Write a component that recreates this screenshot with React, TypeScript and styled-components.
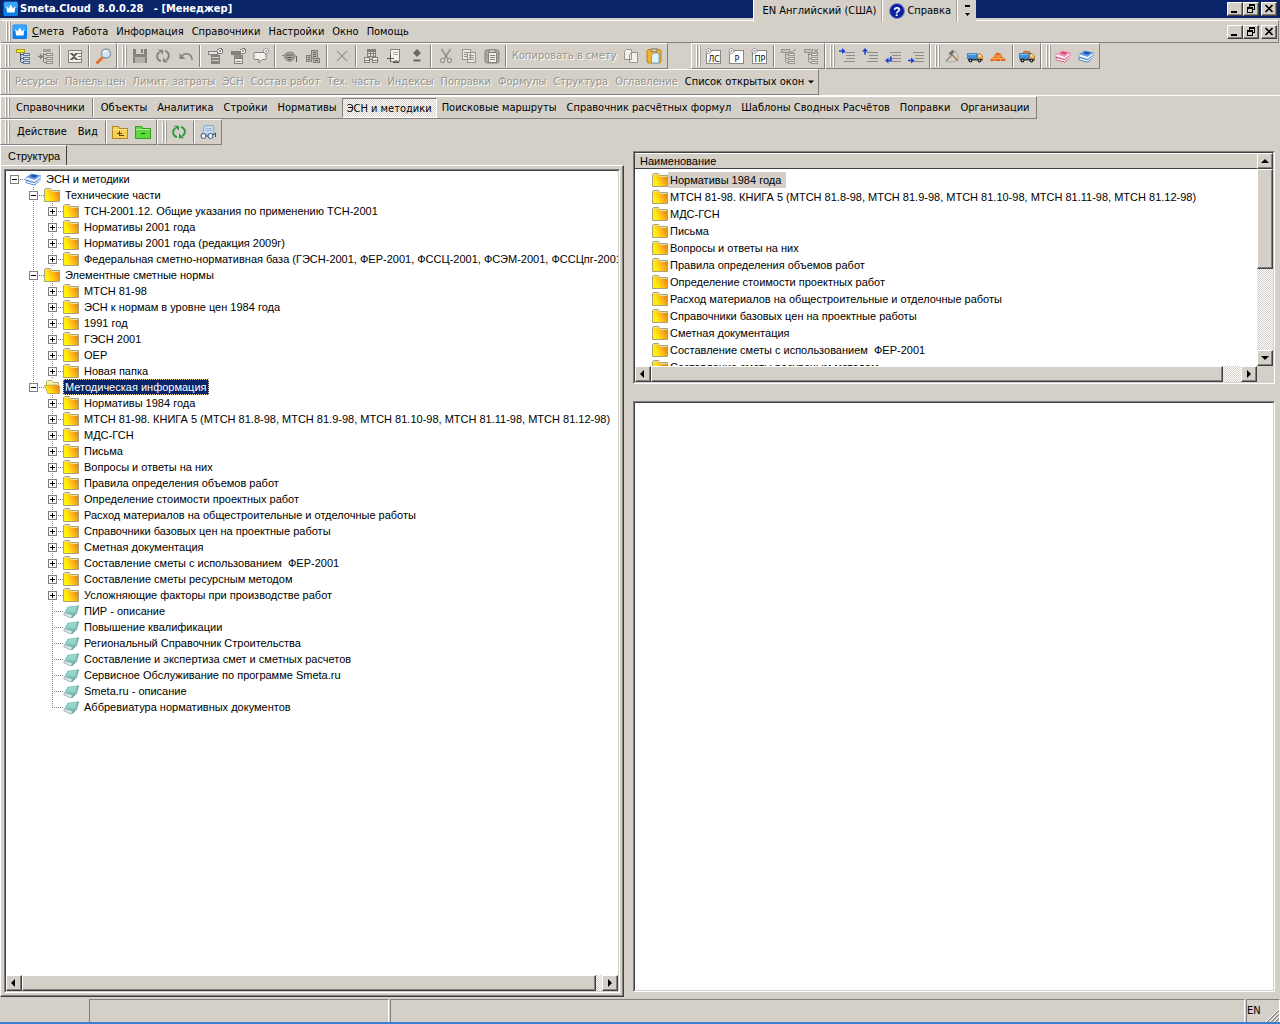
import React, { useState } from 'react';
import styled, { createGlobalStyle, css } from 'styled-components';

const face = '#d4d0c8';
const shade = '#808080';
const dark = '#404040';
const navy = '#0a246a';
const uiFont = '"DejaVu Sans Condensed", "DejaVu Sans", "Noto Sans", sans-serif';
const listFont = '"Liberation Sans", Arial, sans-serif';

const GlobalStyle = createGlobalStyle`
  *, *::before, *::after { box-sizing: border-box; }
  body { margin: 0; background: ${face}; }
  button { margin: 0; padding: 0; border: 0; background: none; font: inherit; color: inherit; cursor: default; }
  ul { margin: 0; padding: 0; list-style: none; }
`;

const raised = css`
  border: 1px solid;
  border-color: #fff ${dark} ${dark} #fff;
  box-shadow: inset -1px -1px 0 ${shade};
`;

const dither = css`
  background: repeating-conic-gradient(#fff 0 25%, ${face} 0 50%) 0 0 / 2px 2px;
`;

const Window = styled.div`
  position: relative;
  display: flex;
  flex-direction: column;
  height: 100vh;
  min-height: 600px;
  overflow: hidden;
  border-bottom: 2px solid #3c7fd0;
  background: ${face};
  color: #000;
  font: 11px/14px ${uiFont};
  white-space: nowrap;
`;

const TitleBar = styled.header`
  display: flex;
  align-items: center;
  gap: 1px;
  height: 18px;
  padding: 0 3px;
  background: ${navy};
  color: #fff;
`;

const Title = styled.h1`
  flex: 1;
  margin: 0;
  font: bold 11px/14px ${uiFont};
  white-space: pre;
`;

const Captions = styled.div`
  display: flex;
  margin-left: auto;
`;

const CaptionButton = styled.button<{ $apart?: boolean }>`
  ${raised}
  display: flex;
  width: 16px;
  height: 14px;
  margin-left: ${p => (p.$apart ? 2 : 0)}px;
  background: ${face};
  svg { width: 14px; height: 12px; }
`;

const LanguageBar = styled.div`
  position: absolute;
  top: 0;
  right: 304px;
  display: flex;
  align-items: center;
  height: 22px;
  padding-left: 3px;
  border-left: 1px solid #fff;
  background: ${face};
`;

const LanguageItem = styled.button`
  display: flex;
  align-items: center;
  gap: 2px;
  height: 22px;
  padding: 0 6px;
  border-right: 1px solid #fff;
  box-shadow: inset -1px 0 0 #a5a29b;
`;

const LanguageMenu = styled.button`
  display: flex;
  width: 18px;
  height: 22px;
  align-items: center;
  justify-content: center;
`;

const MenuRow = styled.nav`
  display: flex;
  align-items: center;
  height: 23px;
  margin: 2px 1px 0;
  padding-right: 1px;
  border: 1px solid;
  border-color: #fff ${shade} ${shade} ${face};
`;

const ToolRow = styled.div<{ $line?: boolean; $short?: boolean }>`
  display: flex;
  height: ${p => (p.$line ? 27 : p.$short ? 23 : 26)}px;
  border-bottom: ${p => (p.$line ? '1px solid #fff' : '0')};
`;

const Band = styled.div<{ $apart?: boolean; $gap?: number }>`
  display: flex;
  align-items: center;
  gap: ${p => p.$gap ?? 0}px;
  margin-left: ${p => (p.$apart ? 23 : 0)}px;
  padding-right: 1px;
  border: 1px solid;
  border-color: #fff ${shade} ${shade} #fff;
`;

const Grip = styled.span`
  flex: none;
  align-self: stretch;
  width: 6px;
  margin: 1px 0 1px 4px;
  background: linear-gradient(90deg, #fff 0 1px, #a19e97 1px 2px, transparent 2px 3px, #fff 3px 4px, #a19e97 4px 5px, transparent 5px);
`;

const Sep = styled.span`
  flex: none;
  align-self: stretch;
  width: 2px;
  margin: 1px 2px;
  border-left: 1px solid ${shade};
  border-right: 1px solid #fff;
`;

const TextButton = styled.button<{ $pad: number; $pressed?: boolean }>`
  display: flex;
  align-items: center;
  gap: 4px;
  height: 20px;
  padding: 0 ${p => p.$pad}px;
  &:disabled { color: #96938c; text-shadow: 1px 1px 0 #fff; }
  ${p => p.$pressed && css`
    ${dither}
    border: 1px solid;
    border-color: ${shade} #fff #fff ${shade};
    padding: 2px ${p.$pad - 1}px 0;
  `}
`;

const IconButton = styled.button`
  flex: none;
  display: flex;
  align-items: center;
  justify-content: center;
  width: 23px;
  height: 22px;
`;

const Glyph = styled.svg`
  display: block;
  flex: none;
  width: 16px;
  height: 16px;
`;

const Workspace = styled.main`
  flex: 1;
  min-height: 0;
  display: grid;
  grid-template-columns: 39fr 41fr;
`;

const LeftPane = styled.section`
  display: flex;
  flex-direction: column;
  min-width: 0;
  min-height: 0;
`;

const Tab = styled.button`
  align-self: flex-start;
  height: 20px;
  padding: 0 6px 0 7px;
  border-left: 1px solid #fff;
  border-top: 1px solid #fff;
  border-right: 1px solid ${dark};
  font: 11px/14px ${listFont};
`;

const TabPage = styled.div`
  flex: 1;
  min-height: 0;
  display: flex;
  margin-bottom: 1px;
  padding: 3px;
  border: 1px solid;
  border-color: #fff ${dark} ${dark} #fff;
  box-shadow: inset -1px -1px 0 ${shade};
`;

const Sunken = styled.div<{ $height?: number }>`
  flex: ${p => (p.$height ? `0 0 ${p.$height}px` : '1')};
  display: flex;
  flex-direction: column;
  min-width: 0;
  min-height: 0;
  background: #fff;
  border: 1px solid;
  border-color: ${shade} #fff #fff ${shade};
`;

const SunkenInner = styled.div`
  flex: 1;
  display: flex;
  flex-direction: column;
  min-width: 0;
  min-height: 0;
  border: 1px solid;
  border-color: ${dark} ${face} ${face} ${dark};
  font: 11px/14px ${listFont};
`;

const Tree = styled.ul`
  flex: 1;
  min-height: 0;
  overflow: hidden;
`;

const TreeRow = styled.li`
  display: flex;
  align-items: center;
  height: 16px;
`;

const dots = (to: string) =>
  `repeating-linear-gradient(${to}, #808080 0 1px, transparent 1px 2px)`;

const Guide = styled.span<{ $line?: 'full' | 'half' | 'none'; $across?: boolean }>`
  flex: none;
  display: flex;
  align-items: center;
  width: 19px;
  height: 16px;
  padding-left: 4px;
  background-repeat: no-repeat;
  background-image: ${p => (p.$line === 'none' || !p.$line ? 'none' : dots('to bottom'))},
    ${p => (p.$across ? dots('to right') : 'none')};
  background-size: 1px ${p => (p.$line === 'half' ? '8px' : '16px')}, 11px 1px;
  background-position: 8px 0, 8px 8px;
`;

const Expander = styled.button`
  width: 9px;
  height: 9px;
  background: #fff;
  svg { display: block; width: 9px; height: 9px; }
`;

const TreeLabel = styled.button<{ $selected: boolean }>`
  height: 16px;
  margin-left: 3px;
  padding: 0 2px;
  color: ${p => (p.$selected ? '#fff' : '#000')};
  background: ${p => (p.$selected ? navy : 'transparent')};
  outline: ${p => (p.$selected ? '1px dotted #f5db95' : 'none')};
  outline-offset: -1px;
  white-space: pre;
`;

const RightPane = styled.section`
  display: flex;
  flex-direction: column;
  gap: 17px;
  min-width: 0;
  min-height: 0;
  padding: 6px 5px 6px 9px;
`;

const ListBody = styled.div`
  flex: 1;
  min-height: 0;
  display: flex;
`;

const ListMain = styled.div`
  flex: 1;
  min-width: 0;
  display: flex;
  flex-direction: column;
`;

const ListHeader = styled.div`
  flex: none;
  height: 16px;
  padding: 0 5px;
  background: ${face};
  border-top: 1px solid #fff;
  border-bottom: 1px solid ${dark};
`;

const List = styled.ul`
  flex: 1;
  min-height: 0;
  overflow: hidden;
  padding: 2px 0 0 17px;
`;

const ListRow = styled.li`
  display: flex;
  align-items: center;
  height: 17px;
`;

const ListLabel = styled.button<{ $selected: boolean }>`
  height: 16px;
  padding: 0 5px 0 2px;
  background: ${p => (p.$selected ? face : 'transparent')};
  white-space: pre;
`;

const ScrollTrack = styled.div<{ $vertical?: boolean }>`
  ${dither}
  flex: none;
  display: flex;
  flex-direction: ${p => (p.$vertical ? 'column' : 'row')};
  ${p => (p.$vertical ? 'width' : 'height')}: 16px;
`;

const ScrollRun = styled.div<{ $vertical?: boolean }>`
  flex: 1;
  min-height: 0;
  display: flex;
  flex-direction: ${p => (p.$vertical ? 'column' : 'row')};
`;

const ScrollButton = styled.button`
  ${raised}
  flex: none;
  display: flex;
  align-items: center;
  justify-content: center;
  width: 16px;
  height: 16px;
  background: ${face};
`;

const Thumb = styled.div<{ $share: number }>`
  ${raised}
  flex: 0 0 ${p => p.$share}%;
  background: ${face};
`;

const VerticalSide = styled.div`
  display: flex;
  flex-direction: column;
  width: 16px;
  background: ${face};
  > div:first-child { flex: 1; }
`;

const Corner = styled.div`
  height: 16px;
`;

const StatusBar = styled.footer`
  display: grid;
  grid-template-columns: 88px 300px 1fr 34px;
  column-gap: 1px;
  height: 24px;
  padding-top: 1px;
`;

const StatusCell = styled.div<{ $plain?: boolean }>`
  display: flex;
  align-items: center;
  justify-content: space-between;
  border: solid;
  border-width: ${p => (p.$plain ? 0 : '1px 1px 0 1px')};
  border-color: ${shade} #fff #fff ${shade};
`;

const ResizeGrip = styled.svg`
  align-self: flex-end;
  width: 13px;
  height: 13px;
`;

/* ---------- drawings ---------- */

const g = '#85827c';
const crisp = { shapeRendering: 'crispEdges' as const };

const treeLines = (main: string, leaf: string) => (
  <g {...crisp}>
    <path d="M5.5 5v9M5.5 6.500h3M5.5 10.500h3M5.5 14.500h3" stroke={main} fill="none" />
    <path d="M8 5h7v3H8zM8 9h7v3H8zM8 13h7v3H8z" fill={leaf} />
    <path d="M9 6.500h5M9 10.500h5M9 14.500h5" stroke="#e4e6ea" />
  </g>
);

const star = (x: number, y: number) => (
  <g>
    <circle cx={x} cy={y} r="2.500" fill="#f4f4f4" stroke="#777" strokeDasharray="1.500 .6" />
    <circle cx={x} cy={y} r="1" fill="#999" />
  </g>
);

const card = (label: string) => (
  <g>
    <path d="M1.500 2.500h14v13h-14z" fill="#fff" stroke="#888" {...crisp} />
    <text x="9" y="14" fontSize="9" fontFamily="DejaVu Sans Condensed, sans-serif" textAnchor="middle" fill="#111">{label}</text>
    {star(3.5, 3)}
  </g>
);

const lines = (
  <path d="M5 4.500h11M7 7.500h9M7 10.500h9M5 13.500h11" stroke="#8b8b94" {...crisp} />
);

const cycle = (color: string) => (
  <g fill="none" stroke={color} strokeWidth="1.800">
    <path d="M6 13.200C1.500 12 .8 6.500 4.500 4" />
    <path d="M10 2.800C14.500 4 15.200 9.500 11.500 12" />
    <path d="M3 1.800h5v5z" fill={color} stroke="none" />
    <path d="M13 14.200H8v-5z" fill={color} stroke="none" />
  </g>
);

const book = (a: string, b: string, c: string) => (
  <g>
    <path d="M1 8.500.5 12 9.500 14.500 15.500 9.500V7L9.500 11.500z" fill={b} />
    <path d="M1.500 10 9.500 12.300 15.500 7.700V9L9.500 13.500 1.500 11.500z" fill="#fff" />
    <path d="M1.500 6 .5 8.500 9.500 11 15.500 6.500V4.500L9.500 8.500z" fill="#fff" stroke={b} strokeWidth=".5" />
    <path d="M1.500 6 6.500 2.500 15.500 4.500 9.500 8.500z" fill={c} />
    <path d="M5 5.300 7.500 3.500 13 4.600 9.700 6.700z" fill={a} />
  </g>
);

const truck = (load: boolean) => (
  <g>
    {load && <path d="M3 5.500 6 3l5 1 1 2z" fill="#e8862e" stroke="#9d4d16" strokeWidth=".6" />}
    <path d="M.5 5.500H10v5.500H.5z" fill="#3a93dc" stroke="#1d5ca0" strokeWidth=".6" />
    <path d="M1 6.300h8.500" stroke="#8fc8f4" />
    <path d="M10.500 6H13.500l2 2.500V12h-5z" fill="#f0a83c" stroke="#8a5a1c" strokeWidth=".6" />
    <path d="M11.500 6.800h1.700l1 1.700h-2.700z" fill="#fff2cc" />
    <path d="M1 11h14.500v1.500H1z" fill="#3c3c3c" />
    <circle cx="3.500" cy="12.500" r="1.900" fill="#222" />
    <circle cx="12.500" cy="12.500" r="1.900" fill="#222" />
    <circle cx="3.500" cy="12.500" r=".7" fill="#ddd" />
    <circle cx="12.500" cy="12.500" r=".7" fill="#ddd" />
  </g>
);

const blueArrow = { fill: '#1c3fd0' };

const drawings: Record<string, React.ReactNode> = {
  crown: (
    <g>
      <rect x=".5" y=".5" width="14.500" height="14.500" rx="1.500" fill="#0b7fe8" />
      <rect x="1" y="1" width="13.500" height="6" rx="1.500" fill="#35a4ff" />
      <path d="M3.200 5 5.600 7.400 7.800 3.500 10 7.400 12.400 5l-.9 6.500H4.100z" fill="#fff" />
    </g>
  ),
  tree: <g>{treeLines('#4a5a7c', '#5878ac')}<path d="M1.500 1.500h8v3h-8z" fill="#f4e92c" stroke="#a89e20" {...crisp} /></g>,
  treeIn: <g>{treeLines(g, '#8f8c86')}<path d="M5 1h8v3H5z" fill="#a5a29b" {...crisp} /><path d="M0 8.500h3" stroke={g} strokeWidth="1.500" /><path d="m2 5.500 3.500 3-3.500 3z" fill={g} /></g>,
  excel: (
    <g {...crisp}>
      <path d="M1.500 2.500h13v12h-13z" fill="#f1efeb" stroke={g} />
      <path d="m4 5 6 7M10 5l-6 7" stroke="#6d6a65" strokeWidth="2" />
      <path d="M11 5.500h3M11 8.500h3M11 11.500h3" stroke={g} />
    </g>
  ),
  lens: (
    <g>
      <path d="M1.500 14.500 6 10" stroke="#e8712a" strokeWidth="3" strokeLinecap="round" />
      <circle cx="10" cy="5.500" r="4.500" fill="#cfe6fb" stroke="#8f96a6" strokeWidth="1.300" />
      <path d="M7.500 5a2.800 2.800 0 0 1 3-2.200" stroke="#fff" strokeWidth="1.300" fill="none" />
    </g>
  ),
  save: <g fill={g} {...crisp}><path d="M1 1h13l1 1v13H1z" /><path d="M4 1h8v5H4z" fill={face} /><path d="M9 1h2v4H9z" /><path d="M3 9h10v6H3z" fill="#b3b0a9" /></g>,
  refreshGray: cycle(g),
  refreshGreen: cycle('#2c9a3c'),
  undo: <g><path d="M4 8C7 4.500 14 5 14 12" stroke={g} strokeWidth="1.500" fill="none" /><path d="M1.500 5v6h6z" fill={g} /></g>,
  newA: <g {...crisp}><path d="M1.500 3.500h9v3h-9z" fill="#e6e4df" stroke={g} /><path d="M4 7h9v9H4z" fill="#85827c" /><path d="M5 9.500h7M5 12.500h7" stroke={face} />{star(13, 3)}</g>,
  newB: <g {...crisp}><path d="M1 3h10v4H1z" fill="#85827c" /><path d="M4 7h9v3H4z" fill="#8d8a84" /><path d="M4.500 10.500h8v5h-8z" fill="#eceae6" stroke={g} /><path d="M6 13.500h5" stroke={g} />{star(13, 3)}</g>,
  newC: <g><path d="M2 4.500h10q1 0 1 1v5q0 1-1 1H9l-3 3.500v-3.500H2q-1 0-1-1v-5q0-1 1-1z" fill="#f4f2ee" stroke={g} />{star(13, 3)}</g>,
  pot: <g><path d="M2 7.500Q4 4 8 4t5 3.500q-1 5-3.500 5.500H6Q3 12 2 7.500z" fill="#aaa79f" stroke={g} /><path d="M4 7h7M4.500 9.500h6M6 11.500h3" stroke="#5f5c57" /><path d="M0 7.500h3M13 8l2 1" stroke={g} /><path d="M14.500 8v6" stroke="#5f5c57" /></g>,
  blocks: <g {...crisp}><path d="M1.500 7.500h5v6h-5zM6.500 2.500h6v8h-6zM8.500 10.500h6v4h-6z" fill="#b3b0a9" stroke={g} /><path d="M8 4.500h3M8 6.500h3M8 8.500h3M10 12.500h3M3 9.500h2M3 11.500h2" stroke="#6a6761" /></g>,
  cross: <path d="m3 3 10 10M13 3 3 13" stroke="#9d9a93" strokeWidth="1.300" />,
  calc: <g {...crisp}><path d="M4.500 1.500h8v7h-8z" stroke={g} fill="#dcdad5" /><path d="M4 2.500h9" stroke={g} strokeWidth="2" /><path d="M5 5.500h7M7.500 4v4M10.500 4v4" stroke={g} /><path d="M1.500 9.500h5v5h-5zM9.500 9.500h5v5h-5z" fill="#eceae6" stroke={g} /><path d="M2 12.500h4M10 12.500h4M6 11.500h4" stroke={g} /></g>,
  sheetAdd: <g {...crisp}><path d="M4.500 1.500h9v12h-9z" fill="#f4f2ee" stroke={g} /><path d="M7 4.500h5M7 6.500h5M8 12.500h4" stroke="#aaa" /><path d="M4.500 7v7M1 10.500h7M7 14.500h6" stroke="#55524d" strokeWidth="1" /></g>,
  plusMinus: <g fill="#6a6761"><path d="m8 1 4 4-4 4-4-4z" /><path d="M4.500 11.500h7v2h-7z" /></g>,
  cut: <g stroke={g} fill="none"><path d="m3.500 1 6 9.500M12.500 1l-6 9.500" strokeWidth="1.400" /><circle cx="4.500" cy="12.500" r="2.200" /><circle cx="11.500" cy="12.500" r="2.200" /></g>,
  copy: <g {...crisp}><path d="M1.500 1.500h8v10h-8zM6.500 4.500h8v10h-8z" fill="#e9e7e3" stroke="#98958e" /><path d="M3 4.500h3M3 6.500h3M3 8.500h3M8 7.500h5M8 9.500h5M8 11.500h5" stroke="#98958e" /></g>,
  paste: <g><rect x="1" y="2" width="14" height="13" rx="2" fill="#aaa79f" stroke={g} /><path d="M4.500 4.500h8v10h-8z" fill="#f0eeea" stroke={g} /><path d="M6 7.500h5M6 9.500h5M6 11.500h5M5 1.500h6v3H5z" stroke={g} fill="#c9c6bf" /></g>,
  copyPlain: <g><path d="M1.500 3.500 3.500 1.500h5v10h-7zM6.500 6.500l2-2h6v10h-8z" fill="#f2f0ec" stroke="#98958e" /></g>,
  pasteGold: <g><rect x="1" y="1.500" width="14" height="13.500" rx="2" fill="#efb32c" stroke="#b88420" /><path d="M5 .8h6v3H5z" fill="#c9c6bf" stroke="#8c6a2a" strokeWidth=".8" /><path d="M5.500 7.500 8 5h5v10H5.500z" fill="#dff2fb" stroke="#7ba3b8" /></g>,
  ls: card('ЛС'),
  r: card('Р'),
  pr: card('ПР'),
  treeTick: <g>{treeLines('#98958e', '#98958e')}<path d="M1.500 1.500h8v3h-8z" fill="#c3c0b9" stroke="#98958e" {...crisp} /><path d="m10 3 2 2 3.500-4" stroke="#88857e" fill="none" /></g>,
  treeCross: <g>{treeLines('#98958e', '#98958e')}<path d="M1.500 1.500h8v3h-8z" fill="#c3c0b9" stroke="#98958e" {...crisp} /><path d="m11 1 4 4M15 1l-4 4" stroke="#88857e" /></g>,
  rowA: <g>{lines}<path d="M0 2.200h3V0l3.500 3L3 6V3.800H0z" {...blueArrow} /></g>,
  rowB: <g>{lines}<path d="M2.200 6.500V3.500H0L3 0l3 3.500H3.800v3z" {...blueArrow} /></g>,
  rowC: <g>{lines}<path d="M0 12.500 3.500 9.500v2.200H5V8.500h1.700v4.800H3.500v2.200z" {...blueArrow} /></g>,
  rowD: <g>{lines}<path d="M0 11.700h3V9.500l3.500 3-3.500 3v-2.200H0z" {...blueArrow} /></g>,
  hammer: <g fill="none"><path d="M10 2.500q6 4 3.500 9-4 4-11.500 2" stroke="#a9a59c" /><path d="M7 5.500 14 13" stroke="#b5803c" strokeWidth="1.600" /><path d="M2 13 8 7" stroke="#8c8a84" strokeWidth="1.400" /><path d="M4.500 5.500 8.500 2l2 1.500-3.500 4z" fill="#6d6f74" /></g>,
  truck: truck(false),
  truckLoad: truck(true),
  bricks: <g><path d="M0 13l1.500-3L4 9l1-3 2.500-1.500L11 6l1 3 2.500 1L16 13z" fill="#e8661c" /><path d="M1.500 10.500h13M4.500 8h7M5 10.500V13M10.500 10.500V13M8 8v2.500" stroke="#ffb56b" strokeWidth=".9" /></g>,
  bookPink: book('#d8497c', '#cf5078', '#ee9ab8'),
  bookBlue: book('#1c54b8', '#3b7fd0', '#5f98e0'),
  folderUp: <g {...crisp}><path d="M.5 3.500V2.500h6l1 1.500h8v10.500H.5z" fill="#f8cf52" stroke="#b08a2e" /><path d="M1 5.500h14" stroke="#fbe59a" /><path d="M7.500 7v4.500h4M5 9h5" stroke="#5b4516" fill="none" /></g>,
  folderGreen: <g {...crisp}><path d="M.5 3.500V2.500h6l1 1.500h8v10.500H.5z" fill="#5bdc3c" stroke="#3a9a2c" /><path d="M1 5.500h14" stroke="#aef597" /><path d="M6 9.500h4" stroke="#1d5a14" /></g>,
  glasses: <g><path d="M2.500 10 4.500 1.500h9l.5 8.500z" fill="#c5dcf2" stroke="#8fa9c8" /><path d="M6 4.500h6M5.500 6.500h7" stroke="#9db8d6" /><circle cx="3.500" cy="12" r="2.500" fill="#eef6ff" stroke="#3c4f66" /><circle cx="10.500" cy="12" r="2.500" fill="#eef6ff" stroke="#3c4f66" /><path d="M6 12h2M13 11l2.500-2v4" stroke="#3c4f66" fill="none" /></g>,
  help: <g><circle cx="8" cy="8" r="7.500" fill="#0d1f9c" stroke="#7a8cc8" /><text x="8" y="12.500" fontSize="12" fontWeight="bold" fontFamily="Liberation Sans, sans-serif" fill="#fff" textAnchor="middle">?</text></g>,
  folder: (
    <g>
      <path d="M.5 14.500V2.500l1-1h5l1.500 2h7.500v11z" fill="url(#folderFill)" stroke="#a9a27c" />
      <path d="M1 2.500h6l1 2h7" stroke="#e5dfa0" fill="none" />
    </g>
  ),
  folderOpen: (
    <g>
      <path d="M2.500 11V2.500l1-1h4l1.500 2h5.500V11z" fill="#f6f0a4" stroke="#b5ad74" />
      <path d="M.5 6.500 12 6l3.500 1v7.500H4z" fill="url(#folderFill)" stroke="#c4a94a" />
    </g>
  ),
  note: (
    <g>
      <path d="M.5 11.500 4.500 4 15.500 2.500 13.500 10 9.500 14.500 7.500 15z" fill="#6fb9ad" />
      <path d="M4.500 4 15.500 2.500 13 10 2.500 10z" fill="#8ccdc3" />
      <path d="M.5 11.500 2 9.800l7.500 2-1 2.700-1 .5z" fill="#dde4e3" stroke="#7fa09b" strokeWidth=".6" />
      <path d="M15.500 2.500 13.500 10 9.500 14.500" stroke="#5b8f88" fill="none" strokeWidth=".8" />
      <path d="m6 5.500 7-1M5 7.500l7-.8" stroke="#b0dfd8" strokeWidth=".8" />
    </g>
  ),
};

const Icon = ({ name }: { name: string }) => (
  <Glyph viewBox="0 0 16 16" fill="none" aria-hidden="true">{drawings[name]}</Glyph>
);

const Defs = styled.svg`
  position: absolute;
`;

const Gradients = () => (
  <Defs width="0" height="0" aria-hidden="true">
    <defs>
      <linearGradient id="folderFill" x1="0" y1=".7" x2="1" y2=".3">
        <stop offset=".2" stopColor="#ffee10" />
        <stop offset=".6" stopColor="#fdb813" />
        <stop offset=".9" stopColor="#ee8a1c" />
      </linearGradient>
    </defs>
  </Defs>
);

const arrows = {
  left: 'M5 0 1 4l4 4z',
  right: 'M2 0l4 4-4 4z',
  up: 'M0 6l4-4 4 4z',
  down: 'M0 2h8L4 6z',
};

const Arrow = ({ to, size = 8 }: { to: keyof typeof arrows; size?: number }) => (
  <svg width={size} height={size} viewBox="0 0 8 8" aria-hidden="true"><path d={arrows[to]} fill="#000" /></svg>
);

const WindowButtons = () => (
  <Captions>
    <CaptionButton aria-label="Свернуть"><svg viewBox="0 0 14 12" {...crisp}><path d="M3 8h6v2H3z" /></svg></CaptionButton>
    <CaptionButton aria-label="Восстановить">
      <svg viewBox="0 0 14 12" {...crisp}>
        <path d="M5 1h6v2H5zM5 3h1v1H5zM10 3h1v4H9V6h1zM3 4h6v2H3zM3 6h1v4H3zM8 6h1v4H8zM3 9h6v1H3z" />
      </svg>
    </CaptionButton>
    <CaptionButton $apart aria-label="Закрыть">
      <svg viewBox="0 0 14 12"><path d="m3.500 2 7 7M10.500 2l-7 7" stroke="#000" strokeWidth="1.700" /></svg>
    </CaptionButton>
  </Captions>
);

/* ---------- toolbars ---------- */

const menus = ['Работа', 'Информация', 'Справочники', 'Настройки', 'Окно', 'Помощь'];

const Tools = ({ items }: { items: string[] }) => (
  <>{items.map((name, i) => (name === '|' ? <Sep key={i} /> : <IconButton key={i} aria-label={name}><Icon name={name} /></IconButton>))}</>
);

const panels = ['Ресурсы', 'Панель цен', 'Лимит. затраты', 'ЭСН', 'Состав работ', 'Тех. часть', 'Индексы', 'Поправки', 'Формулы', 'Структура', 'Оглавление'];

const sections = ['Объекты', 'Аналитика', 'Стройки', 'Нормативы', 'ЭСН и методики', 'Поисковые маршруты', 'Справочник расчётных формул', 'Шаблоны Сводных Расчётов', 'Поправки', 'Организации'];

/* ---------- data ---------- */

type Node = { level: number; text: string; icon: string; mark?: '+' | '-' };

const folders = [
  'Нормативы 1984 года',
  'МТСН 81-98. КНИГА 5 (МТСН 81.8-98, МТСН 81.9-98, МТСН 81.10-98, МТСН 81.11-98, МТСН 81.12-98)',
  'МДС-ГСН',
  'Письма',
  'Вопросы и ответы на них',
  'Правила определения объемов работ',
  'Определение стоимости проектных работ',
  'Расход материалов на общестроительные и отделочные работы',
  'Справочники базовых цен на проектные работы',
  'Сметная документация',
  'Составление сметы с использованием  ФЕР-2001',
  'Составление сметы ресурсным методом',
  'Усложняющие факторы при производстве работ',
];

/* rows that fall inside the list's viewport at its current scroll position */
const listed = folders.slice(0, 12);

const branch = (items: string[]): Node[] => items.map(text => ({ level: 2, text, icon: 'folder', mark: '+' }));

const nodes: Node[] = [
  { level: 0, text: 'ЭСН и методики', icon: 'bookBlue', mark: '-' },
  { level: 1, text: 'Технические части', icon: 'folder', mark: '-' },
  ...branch([
    'ТСН-2001.12. Общие указания по применению ТСН-2001',
    'Нормативы 2001 года',
    'Нормативы 2001 года (редакция 2009г)',
    'Федеральная сметно-нормативная база (ГЭСН-2001, ФЕР-2001, ФССЦ-2001, ФСЭМ-2001, ФССЦпг-2001',
  ]),
  { level: 1, text: 'Элементные сметные нормы', icon: 'folder', mark: '-' },
  ...branch(['МТСН 81-98', 'ЭСН к нормам в уровне цен 1984 года', '1991 год', 'ГЭСН 2001', 'ОЕР', 'Новая папка']),
  { level: 1, text: 'Методическая информация', icon: 'folderOpen', mark: '-' },
  ...branch(folders),
  ...[
    'ПИР - описание',
    'Повышение квалификации',
    'Региональный Справочник Строительства',
    'Составление и экспертиза смет и сметных расчетов',
    'Сервисное Обслуживание по программе Smeta.ru',
    'Smeta.ru - описание',
    'Аббревиатура нормативных документов',
  ].map((text): Node => ({ level: 2, text, icon: 'note' })),
];

const lastTop = nodes.map(n => n.level).lastIndexOf(1);

const guideFor = (node: Node, index: number, depth: number): 'full' | 'half' | 'none' => {
  if (depth === 0) return 'none';
  if (depth === 1) return index < lastTop ? 'full' : index === lastTop ? 'half' : 'none';
  return index === nodes.length - 1 ? 'half' : 'full';
};

const TreeView = () => {
  const [selected, setSelected] = useState(lastTop);
  return (
    <Tree role="tree" aria-label="Структура">
      {nodes.map((node, i) => (
        <TreeRow key={i} role="treeitem" aria-selected={i === selected}>
          {Array.from({ length: node.level + 1 }, (_, depth) => (
            <Guide key={depth} $line={guideFor(node, i, depth)} $across={depth === node.level}>
              {depth === node.level && node.mark && (
                <Expander aria-label={node.mark === '+' ? 'Развернуть' : 'Свернуть'}>
                  <svg viewBox="0 0 9 9" {...crisp}>
                    <path d="M.5.5h8v8h-8z" fill="#fff" stroke="#808080" />
                    <path d={node.mark === '+' ? 'M2 4.500h5M4.500 2v5' : 'M2 4.500h5'} stroke="#000" />
                  </svg>
                </Expander>
              )}
            </Guide>
          ))}
          <Icon name={node.icon} />
          <TreeLabel $selected={i === selected} onClick={() => setSelected(i)}>{node.text}</TreeLabel>
        </TreeRow>
      ))}
    </Tree>
  );
};

const ScrollBar = ({ vertical, share }: { vertical?: boolean; share: number }) => (
  <ScrollTrack $vertical={vertical}>
    <ScrollButton aria-label={vertical ? 'Вверх' : 'Влево'}><Arrow to={vertical ? 'up' : 'left'} /></ScrollButton>
    <ScrollRun $vertical={vertical}><Thumb $share={share} /></ScrollRun>
    <ScrollButton aria-label={vertical ? 'Вниз' : 'Вправо'}><Arrow to={vertical ? 'down' : 'right'} /></ScrollButton>
  </ScrollTrack>
);

export default function App() {
  const [row, setRow] = useState(0);
  return (
    <Window>
      <GlobalStyle />
      <Gradients />
      <TitleBar>
        <Icon name="crown" />
        <Title>{'Smeta.Cloud  8.0.0.28   - [Менеджер]'}</Title>
        <WindowButtons />
      </TitleBar>
      <LanguageBar>
        <LanguageItem>EN Английский (США)</LanguageItem>
        <LanguageItem><Icon name="help" />Справка</LanguageItem>
        <LanguageMenu aria-label="Параметры">
          <svg width="7" height="12" viewBox="0 0 7 12"><path d="M1 0h5v2H1zM1 8h5L3.500 11z" /></svg>
        </LanguageMenu>
      </LanguageBar>

      <MenuRow>
        <Grip />
        <Icon name="crown" />
        <TextButton $pad={4}><span><u>С</u>мета</span></TextButton>
        {menus.map(m => <TextButton key={m} $pad={4}>{m}</TextButton>)}
        <WindowButtons />
      </MenuRow>

      <ToolRow>
        <Band><Grip /><Tools items={['tree', 'treeIn', '|', 'excel', '|', 'lens']} /></Band>
        <Band>
          <Grip />
          <Tools items={['save', 'refreshGray', 'undo', '|', 'newA', 'newB', 'newC', '|', 'pot', 'blocks', '|', 'cross', '|', 'calc', 'sheetAdd', 'plusMinus', '|', 'cut', 'copy', 'paste', '|']} />
          <TextButton $pad={3} disabled>Копировать в смету</TextButton>
          <Tools items={['copyPlain', 'pasteGold']} />
        </Band>
        <Band $apart><Grip /><Tools items={['ls', 'r', 'pr', '|', 'treeTick', 'treeCross']} /></Band>
        <Band><Grip /><Tools items={['rowA', 'rowB', 'rowC', 'rowD']} /></Band>
        <Band><Grip /><Tools items={['hammer', 'truck', 'bricks', '|', 'truckLoad']} /></Band>
        <Band><Grip /><Tools items={['bookPink', 'bookBlue']} /></Band>
      </ToolRow>

      <ToolRow $line>
        <Band $gap={1}>
          <Grip />
          {panels.map(p => <TextButton key={p} $pad={3} disabled>{p}</TextButton>)}
          <TextButton $pad={3}>Список открытых окон<Arrow to="down" size={6} /></TextButton>
        </Band>
      </ToolRow>

      <ToolRow as="nav" $short>
        <Band>
          <Grip />
          <TextButton $pad={5}>Справочники</TextButton>
          <Sep />
          {sections.map(s => <TextButton key={s} $pad={5} $pressed={s === 'ЭСН и методики'}>{s}</TextButton>)}
        </Band>
      </ToolRow>

      <ToolRow>
        <Band>
          <Grip />
          <TextButton $pad={6}>Действие</TextButton>
          <TextButton $pad={5}>Вид</TextButton>
          <Sep />
          <Tools items={['folderUp', 'folderGreen']} />
        </Band>
        <Band><Grip /><Tools items={['refreshGreen', '|', 'glasses']} /></Band>
      </ToolRow>

      <Workspace>
        <LeftPane>
          <Tab>Структура</Tab>
          <TabPage>
            <Sunken>
              <SunkenInner>
                <TreeView />
                <ScrollBar share={99} />
              </SunkenInner>
            </Sunken>
          </TabPage>
        </LeftPane>
        <RightPane>
          <Sunken $height={233}>
            <SunkenInner>
              <ListBody>
                <ListMain>
                  <ListHeader>Наименование</ListHeader>
                  <List>
                    {listed.map((text, i) => (
                      <ListRow key={text}>
                        <Icon name="folder" />
                        <ListLabel $selected={i === row} onClick={() => setRow(i)}>{text}</ListLabel>
                      </ListRow>
                    ))}
                  </List>
                  <ScrollBar share={97} />
                </ListMain>
                <VerticalSide>
                  <ScrollBar vertical share={55} />
                  <Corner />
                </VerticalSide>
              </ListBody>
            </SunkenInner>
          </Sunken>
          <Sunken><SunkenInner /></Sunken>
        </RightPane>
      </Workspace>

      <StatusBar>
        <StatusCell $plain />
        <StatusCell />
        <StatusCell />
        <StatusCell>
          EN
          <ResizeGrip viewBox="0 0 13 13"><path d="M1 13 13 1M5 13l8-8M9 13l4-4" stroke="#808080" strokeWidth="1.500" /><path d="M0 13 13 0M4 13l9-9M8 13l5-5" stroke="#fff" /></ResizeGrip>
        </StatusCell>
      </StatusBar>
    </Window>
  );
}
